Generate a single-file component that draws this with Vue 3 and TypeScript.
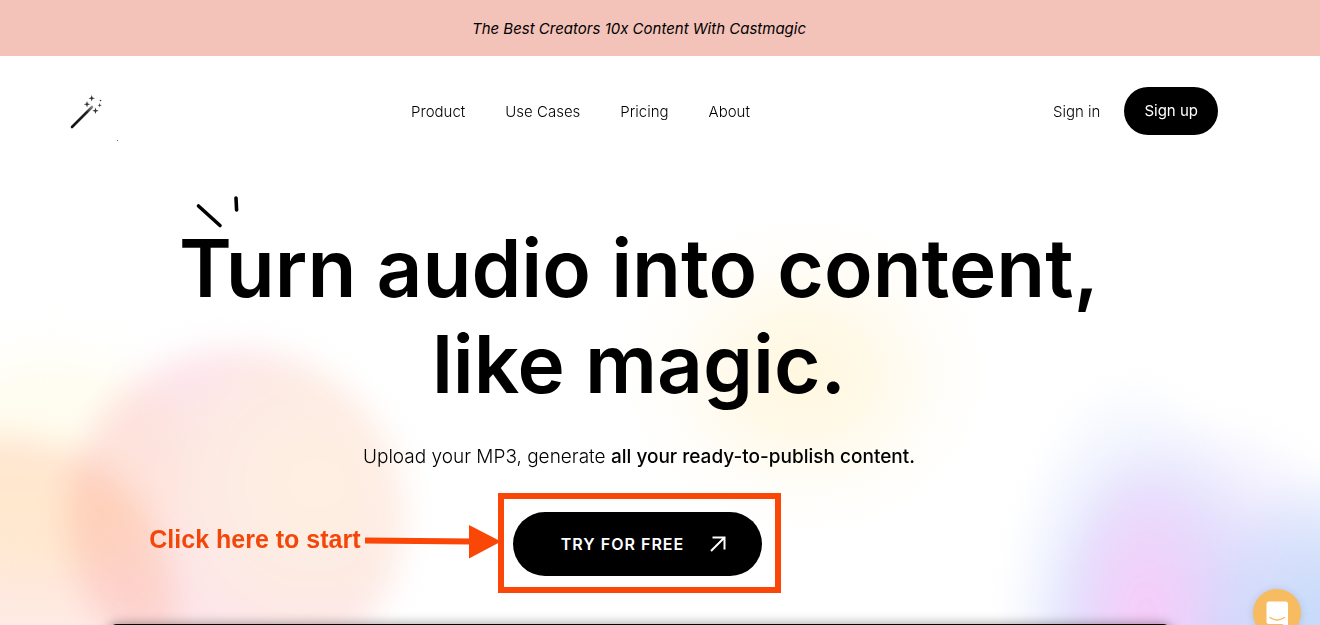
<script setup lang="ts">
interface NavItem {
  label: string
  href: string
}

const navItems: NavItem[] = [
  { label: 'Product', href: '#product' },
  { label: 'Use Cases', href: '#use-cases' },
  { label: 'Pricing', href: '#pricing' },
  { label: 'About', href: '#about' },
]
</script>

<template>
  <div class="page">
    <div class="backdrop" aria-hidden="true">
      <span class="blob haze"></span>
      <span class="blob rose"></span>
      <span class="blob peach"></span>
      <span class="glow"></span>
      <span class="aurora"></span>
    </div>

    <div class="banner">
      <p>The Best Creators 10x Content With Castmagic</p>
    </div>

    <header class="header">
      <a class="logo" href="#home" aria-label="Castmagic home">
        <svg viewBox="0 0 50 50" width="50" height="50">
          <defs>
            <linearGradient id="wand" gradientUnits="userSpaceOnUse" x1="12" y1="41" x2="33" y2="20">
              <stop offset="0" stop-color="#111" />
              <stop offset="0.7" stop-color="#222" />
              <stop offset="1" stop-color="#999" />
            </linearGradient>
          </defs>
          <path d="M12 41 32 21" stroke="url(#wand)" stroke-width="2.6" stroke-linecap="round" />
          <g fill="#333">
            <path d="M31.700 9l.8 2.500 2.500.8-2.500.8-.8 2.500-.8-2.500-2.500-.8 2.500-.8z" />
            <path d="M27 15l.8 2.500 2.500.8-2.500.8-.8 2.500-.8-2.500-2.500-.8 2.500-.8z" />
            <path d="M35.500 21.500l.8 2.500 2.500.8-2.500.8-.8 2.500-.8-2.500-2.500-.8 2.500-.8z" />
            <path d="M39.700 17l.5 1.700 1.700.5-1.700.5-.5 1.700-.5-1.700-1.700-.5 1.700-.5z" />
            <circle cx="40.500" cy="14.500" r="0.800" />
            <circle cx="57.500" cy="54.500" r="0.500" />
          </g>
        </svg>
      </a>
      <nav class="nav" aria-label="Main">
        <a v-for="item in navItems" :key="item.label" :href="item.href">{{ item.label }}</a>
      </nav>
      <div class="account">
        <a class="signin" href="#signin">Sign in</a>
        <a class="signup" href="#signup">Sign up</a>
      </div>
    </header>

    <main class="hero">
      <h1>
        <span class="first">
          <svg class="spark" viewBox="0 0 44 34" width="44" height="34" aria-hidden="true">
            <path d="M3.500 11 25 30.500M41 3l.6 12" fill="none" stroke="#000" stroke-width="3.600" stroke-linecap="round" />
          </svg>
          Turn audio into content,
        </span>
        <br />
        like magic.
      </h1>
      <p class="lead">Upload your MP3, generate <strong>all your ready-to-publish content.</strong></p>
      <div class="callout">
        <div class="hint">
          <span>Click here to start</span>
          <svg viewBox="0 0 136 36" width="136" height="36" aria-hidden="true">
            <path d="M0 15.500 106 16.500" stroke="#fa4607" stroke-width="6" />
            <path d="M104 0 136 16.500 104 33.500z" fill="#fa4607" />
          </svg>
        </div>
        <button class="cta" type="button">
          TRY FOR FREE
          <svg viewBox="0 0 16 16" width="16" height="16" aria-hidden="true">
            <path d="M1 15 14.500 1.500M2.500 1.500H14.500V13.500" fill="none" stroke="#fff" stroke-width="2" />
          </svg>
        </button>
      </div>
    </main>

    <div class="preview"></div>

    <button class="chat" type="button" aria-label="Open chat">
      <svg viewBox="0 0 48 48" width="48" height="48" aria-hidden="true">
        <path d="M16 12.500H32.500Q35 12.500 35 15V38L29 35H16Q13.500 35 13.500 32.500V15Q13.500 12.500 16 12.500Z" fill="#fff" />
        <path d="M17 28.500Q24 33.500 31.500 28.500" fill="none" stroke="#f7bc60" stroke-width="1.400" stroke-linecap="round" />
      </svg>
    </button>
  </div>
</template>

<style>
body {
  margin: 0;
}
</style>

<style scoped>
.page {
  position: relative;
  height: 100vh;
  overflow: hidden;
  background: #fff;
  color: #000;
  font-family: Inter, "Liberation Sans", sans-serif;
}

.page a {
  color: inherit;
  text-decoration: none;
}

.backdrop {
  position: absolute;
  inset: 0;
}

.blob {
  position: absolute;
  border-radius: 50%;
  mix-blend-mode: multiply;
}

.haze {
  left: -80px;
  bottom: 60px;
  width: 260px;
  height: 210px;
  background: #fffdf0;
  filter: blur(24px);
}

.rose {
  left: 68px;
  bottom: -60px;
  width: 336px;
  height: 336px;
  background:
    radial-gradient(circle at 74% 40%, #fff0e2 0, #fdebe3 32%, #fdebe300 52%),
    linear-gradient(180deg, #fde4ec 0, #fee5e7 50%, #fde6ea 80%);
  filter: blur(16px);
}

.peach {
  left: -180px;
  bottom: -160px;
  width: 355px;
  height: 350px;
  background: linear-gradient(180deg, #ffe8de 6%, #ffebda 25%, #ffe9de 45%, #ffecea 60%);
  filter: blur(16px);
}

.glow {
  position: absolute;
  left: 620px;
  top: 215px;
  width: 370px;
  height: 320px;
  background: radial-gradient(closest-side, #fff7df 0, #fff9e8 35%, #fffdf8 70%, #fff0 100%);
}

.aurora {
  position: absolute;
  right: -30px;
  bottom: -40px;
  width: 360px;
  height: 340px;
  background:
    radial-gradient(ellipse 85px 160px at 155px 290px, #f8cbf9 0, #f6cff9aa 40%, #f4d4fb00 100%),
    radial-gradient(ellipse 150px 170px at 350px 310px, #c0d8f9 0, #cadcfabb 50%, #dcecff00 100%),
    radial-gradient(ellipse 180px 230px at 220px 320px, #d9d0fb 0, #dfd8fcbb 50%, #eef0ff00 100%),
    radial-gradient(ellipse 135px 270px at 145px 320px, #d8dffc 0, #dfe6fecc 50%, #f0f8ff00 100%);
  filter: blur(12px);
}

.banner {
  position: relative;
  display: flex;
  align-items: center;
  justify-content: center;
  height: 56px;
  padding-right: 42px;
  background: #f3c2b9;
}

.banner p {
  margin: 0;
  font-size: 15px;
  font-style: italic;
}

.header {
  position: relative;
  display: flex;
  align-items: center;
  justify-content: space-between;
  height: 110px;
  padding: 0 102px 0 60px;
  font-size: 15px;
  font-weight: 300;
}

.logo {
  width: 48px;
  height: 50px;
}

.logo svg {
  display: block;
  overflow: visible;
}

.nav {
  display: flex;
  gap: 40px;
}

.account {
  display: flex;
  align-items: center;
  gap: 24px;
}

.page .signup {
  padding: 0 20px;
  border-radius: 24px;
  background: #000;
  color: #fff;
  font-weight: 400;
  line-height: 48px;
}

.hero {
  position: relative;
  display: flex;
  flex-direction: column;
  align-items: center;
  padding: 54px 42px 0 0;
  text-align: center;
}

h1 {
  margin: 0;
  font-size: 80px;
  font-weight: 600;
  line-height: 96px;
}

.first {
  position: relative;
  white-space: nowrap;
}

.spark {
  position: absolute;
  left: 16px;
  top: -24px;
}

.lead {
  margin: 31px 0 22px;
  font-size: 19px;
  font-weight: 300;
  line-height: 28px;
}

.lead strong {
  font-weight: 500;
}

.callout {
  position: relative;
  padding: 13px 13px 11px 9px;
  border: 6px solid #fa4607;
}

.cta {
  display: flex;
  align-items: center;
  justify-content: center;
  gap: 26px;
  width: 249px;
  height: 64px;
  padding: 0 0 0 13px;
  border: 0;
  border-radius: 32px;
  background: #000;
  color: #fff;
  font: 600 16px Inter, sans-serif;
  letter-spacing: 1px;
}

.hint {
  position: absolute;
  right: 100%;
  top: 22px;
  display: flex;
  align-items: flex-start;
  gap: 4px;
  margin-right: 3px;
  color: #f5460a;
  font: bold 25px/36px "Liberation Sans", Arial, sans-serif;
  white-space: nowrap;
}

.hint svg {
  margin-top: 4px;
}

.preview {
  position: relative;
  height: 320px;
  margin: 31px 149px 0 109px;
  border-radius: 8px;
  background: #000;
  box-shadow: 0 0 12px #0006;
}

.chat {
  position: absolute;
  right: 19px;
  bottom: -12px;
  width: 48px;
  height: 48px;
  padding: 0;
  border: 0;
  border-radius: 50%;
  background: #f7bc60;
  box-shadow: 0 1px 8px #0002;
}

.chat svg {
  display: block;
}
</style>
